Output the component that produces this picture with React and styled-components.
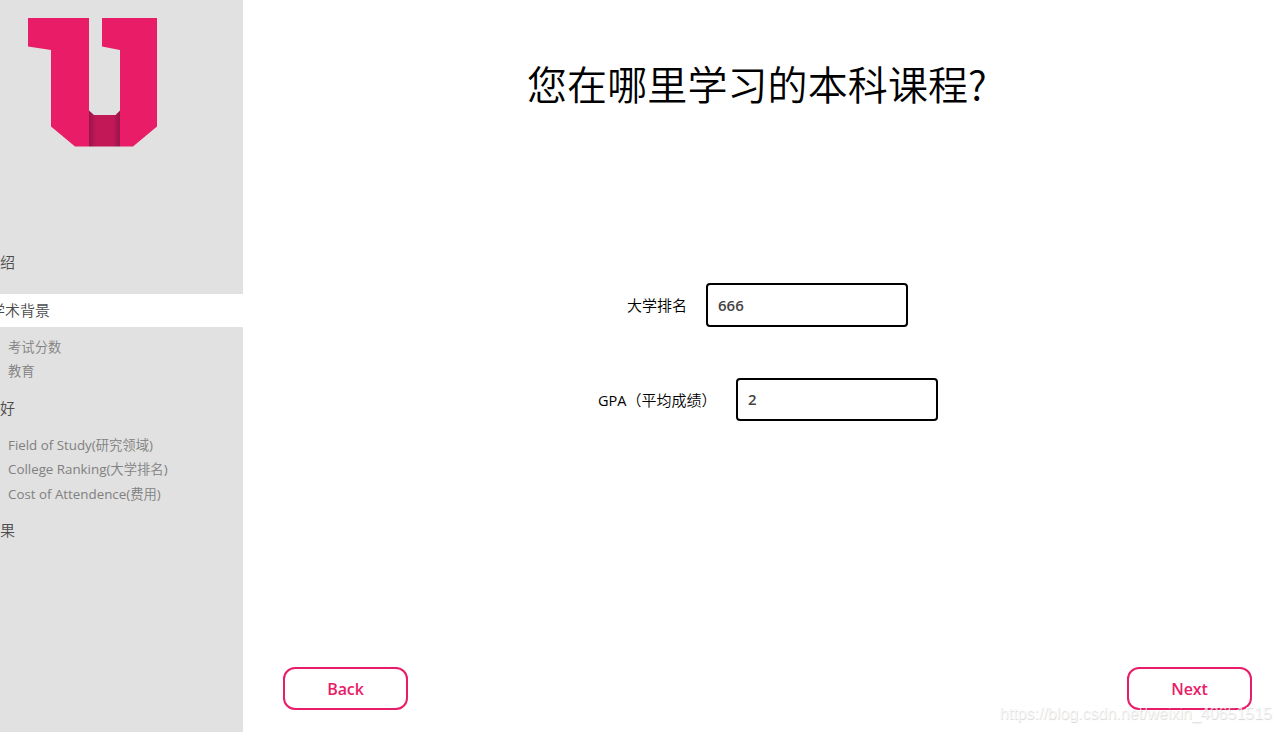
import React from "react";
import styled, { createGlobalStyle } from "styled-components";

const GlobalStyle = createGlobalStyle`
  * { box-sizing: border-box; }
  body {
    margin: 0;
    overflow: hidden;
    background: #fff;
    color: #000;
    font-family: "Open Sans", "Noto Sans CJK SC", sans-serif;
  }
`;

const Page = styled.div`
  position: relative;
  display: flex;
  width: 1281px;
  height: 732px;
  overflow: hidden;
`;

const Sidebar = styled.aside`
  flex: 0 0 243px;
  overflow: hidden;
  background: #e1e1e1;
`;

const Brand = styled.div`
  height: 246px;
  padding: 17px 0 0 27px;
`;

const Logo = styled.svg`
  display: block;
`;

const NavItem = styled.div`
  height: 33px;
  margin-bottom: ${(p) => p.$gap || 0}px;
  background: ${(p) => (p.$active ? "#fff" : "transparent")};
  color: #4d4d4d;
  font-family: "Noto Sans CJK SC", sans-serif;
  font-size: 15px;
  font-weight: 350;
  line-height: 31px;
  white-space: nowrap;
  text-indent: ${(p) => (p.$active ? -10 : -15)}px;
`;

const SubNav = styled.div`
  display: grid;
  grid-auto-rows: 24.4px;
  padding: 8px 0 8px 8px;
`;

const SubItem = styled.div`
  color: #808080;
  font-size: 13.33px;
  line-height: 24px;
  white-space: nowrap;
`;

const Cjk = styled.span`
  font-family: "Noto Sans CJK SC", sans-serif;
  font-weight: 350;
  line-height: 1;
`;

const Main = styled.main`
  flex: 1;
  display: flex;
  flex-direction: column;
`;

const Title = styled.h1`
  height: 60px;
  margin: 53px 0 0 284px;
  font-family: "Noto Sans CJK SC", sans-serif;
  font-size: 40px;
  font-weight: 350;
  letter-spacing: 0.1px;
  line-height: 60px;
  white-space: nowrap;
`;

const Form = styled.form`
  display: flex;
  flex-direction: column;
  gap: 51px;
  padding-top: 170px;
`;

const Field = styled.label`
  display: flex;
  align-items: center;
  padding-left: ${(p) => p.$indent}px;
`;

const Label = styled.span`
  width: ${(p) => p.$width}px;
  padding-top: 2px;
  font-size: 14.5px;
  line-height: 20px;
  white-space: nowrap;

  ${Cjk} {
    font-size: 15px;
  }
`;

const Input = styled.input`
  width: 202px;
  height: ${(p) => p.$height}px;
  padding: 0 10px ${(p) => (p.$height === 43 ? 2 : 0)}px 10px;
  border: 2px solid #000;
  border-radius: 4px;
  outline: none;
  background: #fff;
  color: #444;
  font-family: "Open Sans", sans-serif;
  font-size: 15px;
  font-weight: 600;
`;

const Actions = styled.div`
  display: flex;
  justify-content: space-between;
  margin-top: auto;
  padding: 0 29px 22px 40px;
`;

const Button = styled.button`
  width: 125px;
  height: 43px;
  padding: 0;
  border: 2px solid #e91c68;
  border-radius: 12px;
  background: #fff;
  color: #e91c68;
  font-family: "Open Sans", sans-serif;
  font-size: 16px;
  font-weight: 550;
  letter-spacing: -0.1px;
`;

const Watermark = styled.div`
  position: absolute;
  right: 9px;
  bottom: 8px;
  color: rgba(255, 255, 255, 0.75);
  font-family: "Liberation Sans", sans-serif;
  font-size: 16px;
  line-height: 20px;
  text-shadow: 0.5px 0.5px 1px rgba(0, 0, 0, 0.17);
  white-space: nowrap;
`;

function BrandLogo() {
  return (
    <Logo width="132" height="132" viewBox="27 17 132 132" aria-label="U">
      <defs>
        <linearGradient id="fold" x1="0" x2="1" y1="0" y2="0">
          <stop offset="0" stopColor="#96154a" />
          <stop offset="0.22" stopColor="#c21857" />
          <stop offset="0.78" stopColor="#c21857" />
          <stop offset="1" stopColor="#96154a" />
        </linearGradient>
      </defs>
      <path d="M89 110.5L94 115H115.5L120 110.5V146.5H89Z" fill="url(#fold)" />
      <path d="M28 18H89V146.5H75L51 126.5V50L28 46.5Z" fill="#e91c68" />
      <path d="M102 18H157V126.5L133 146.5H120V50L102 46.5Z" fill="#e91c68" />
    </Logo>
  );
}

export default function App() {
  return (
    <>
      <GlobalStyle />
      <Page>
        <Sidebar>
          <Brand>
            <BrandLogo />
          </Brand>
          <NavItem $gap={15}>介绍</NavItem>
          <NavItem $active>学术背景</NavItem>
          <SubNav>
            <SubItem><Cjk>考试分数</Cjk></SubItem>
            <SubItem><Cjk>教育</Cjk></SubItem>
          </SubNav>
          <NavItem>偏好</NavItem>
          <SubNav>
            <SubItem>Field of Study(<Cjk>研究领域</Cjk>)</SubItem>
            <SubItem>College Ranking(<Cjk>大学排名</Cjk>)</SubItem>
            <SubItem>Cost of Attendence(<Cjk>费用</Cjk>)</SubItem>
          </SubNav>
          <NavItem>结果</NavItem>
        </Sidebar>
        <Main>
          <Title>您在哪里学习的本科课程?</Title>
          <Form>
            <Field $indent={384}>
              <Label $width={79}><Cjk>大学排名</Cjk></Label>
              <Input $height={44} defaultValue="666" />
            </Field>
            <Field $indent={355}>
              <Label $width={138}>GPA<Cjk>（平均成绩）</Cjk></Label>
              <Input $height={43} defaultValue="2" />
            </Field>
          </Form>
          <Actions>
            <Button>Back</Button>
            <Button>Next</Button>
          </Actions>
        </Main>
        <Watermark>https://blog.csdn.net/weixin_40651515</Watermark>
      </Page>
    </>
  );
}
